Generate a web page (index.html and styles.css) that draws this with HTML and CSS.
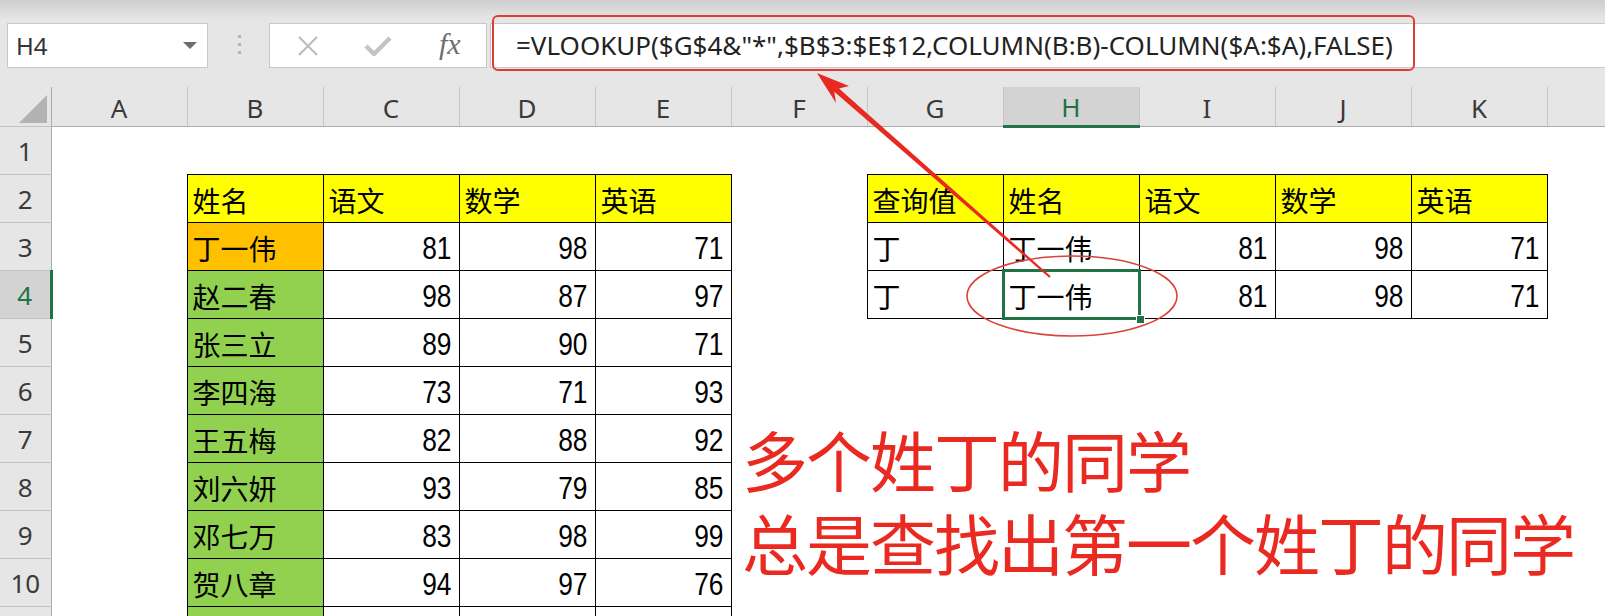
FILE: index.html
```html
<!DOCTYPE html>
<html lang="zh-CN">
<head>
<meta charset="UTF-8">
<title>VLOOKUP 通配符查找</title>
<link rel="stylesheet" href="styles.css">
</head>
<body>
    <div class="topbar">
        <div class="name-box">
            <span>H4</span>
            <span class="caret"></span>
        </div>
        <div class="grip"><i></i><i></i><i></i></div>
        <div class="fx-tools">
            <svg class="ico" width="24" height="20" viewBox="0 0 24 20">
                <path d="M3 1 L21 19 M21 1 L3 19" stroke="#bdbdbd" stroke-width="2.2" fill="none"/>
            </svg>
            <svg class="ico" width="28" height="20" viewBox="0 0 28 20">
                <path d="M2 10 L10 18 L26 2" stroke="#c4c4c4" stroke-width="4.5" fill="none"/>
            </svg>
            <span class="fx">fx</span>
        </div>
        <div class="formula">=VLOOKUP($G$4&amp;"*",$B$3:$E$12,COLUMN(B:B)-COLUMN($A:$A),FALSE)</div>
    </div>

    <table class="sheet">
        <colgroup>
            <col class="c-head">
            <col><col><col><col><col><col><col><col><col><col><col>
            <col class="c-last">
        </colgroup>
        <tr class="col-heads">
            <th class="corner"><span class="tri"></span></th>
            <th>A</th><th>B</th><th>C</th><th>D</th><th>E</th><th>F</th>
            <th>G</th><th class="sel">H</th><th>I</th><th>J</th><th>K</th><th></th>
        </tr>
        <tr>
            <th>1</th>
            <td></td><td></td><td></td><td></td><td></td><td></td>
            <td></td><td></td><td></td><td></td><td></td><td></td>
        </tr>
        <tr>
            <th>2</th>
            <td></td>
            <td class="b yel">姓名</td><td class="b yel">语文</td><td class="b yel">数学</td><td class="b yel">英语</td>
            <td></td>
            <td class="b yel">查询值</td><td class="b yel">姓名</td><td class="b yel">语文</td><td class="b yel">数学</td><td class="b yel">英语</td>
            <td></td>
        </tr>
        <tr>
            <th>3</th>
            <td></td>
            <td class="b org">丁一伟</td><td class="b num"><span>81</span></td><td class="b num"><span>98</span></td><td class="b num"><span>71</span></td>
            <td></td>
            <td class="b">丁</td><td class="b">丁一伟</td><td class="b num"><span>81</span></td><td class="b num"><span>98</span></td><td class="b num"><span>71</span></td>
            <td></td>
        </tr>
        <tr>
            <th class="sel">4</th>
            <td></td>
            <td class="b grn">赵二春</td><td class="b num"><span>98</span></td><td class="b num"><span>87</span></td><td class="b num"><span>97</span></td>
            <td></td>
            <td class="b">丁</td><td class="b active">丁一伟</td><td class="b num"><span>81</span></td><td class="b num"><span>98</span></td><td class="b num"><span>71</span></td>
            <td></td>
        </tr>
        <tr>
            <th>5</th>
            <td></td>
            <td class="b grn">张三立</td><td class="b num"><span>89</span></td><td class="b num"><span>90</span></td><td class="b num"><span>71</span></td>
            <td></td><td></td><td></td><td></td><td></td><td></td><td></td>
        </tr>
        <tr>
            <th>6</th>
            <td></td>
            <td class="b grn">李四海</td><td class="b num"><span>73</span></td><td class="b num"><span>71</span></td><td class="b num"><span>93</span></td>
            <td></td><td></td><td></td><td></td><td></td><td></td><td></td>
        </tr>
        <tr>
            <th>7</th>
            <td></td>
            <td class="b grn">王五梅</td><td class="b num"><span>82</span></td><td class="b num"><span>88</span></td><td class="b num"><span>92</span></td>
            <td></td><td></td><td></td><td></td><td></td><td></td><td></td>
        </tr>
        <tr>
            <th>8</th>
            <td></td>
            <td class="b grn">刘六妍</td><td class="b num"><span>93</span></td><td class="b num"><span>79</span></td><td class="b num"><span>85</span></td>
            <td></td><td></td><td></td><td></td><td></td><td></td><td></td>
        </tr>
        <tr>
            <th>9</th>
            <td></td>
            <td class="b grn">邓七万</td><td class="b num"><span>83</span></td><td class="b num"><span>98</span></td><td class="b num"><span>99</span></td>
            <td></td><td></td><td></td><td></td><td></td><td></td><td></td>
        </tr>
        <tr>
            <th>10</th>
            <td></td>
            <td class="b grn">贺八章</td><td class="b num"><span>94</span></td><td class="b num"><span>97</span></td><td class="b num"><span>76</span></td>
            <td></td><td></td><td></td><td></td><td></td><td></td><td></td>
        </tr>
        <tr>
            <th></th>
            <td></td>
            <td class="b grn"></td><td class="b"></td><td class="b"></td><td class="b"></td>
            <td></td><td></td><td></td><td></td><td></td><td></td><td></td>
        </tr>
    </table>

    <!-- annotations drawn over the sheet -->
    <div class="mark-box"></div>
    <svg class="marks" width="1605" height="616" viewBox="0 0 1605 616">
        <polygon fill="#e9281f" points="817,73 849,86 839,88.6 1050.7,276.3 1049.3,277.8 834.3,91.8 836,103"/>
        <ellipse cx="1072" cy="296" rx="105" ry="40" fill="none" stroke="#d9433b" stroke-width="1.6"/>
    </svg>
    <div class="note">
        <div>多个姓丁的同学</div>
        <div>总是查找出第一个姓丁的同学</div>
    </div>
</body>
</html>
```

FILE: styles.css
```css
html, body {
    margin: 0;
    height: 616px;
    overflow: hidden;
}
body {
    position: relative;
    width: 1605px;
    background: #fff;
    font-family: "Noto Sans", sans-serif;
    color: #222;
}
.topbar {
    display: flex;
    align-items: flex-start;
    height: 87px;
    padding-top: 23px;
    box-sizing: border-box;
    background: linear-gradient(#cdcdcd 0px, #e2e2e2 16px, #e6e6e6 22px);
}
.name-box {
    display: flex;
    align-items: center;
    justify-content: space-between;
    width: 201px;
    height: 45px;
    margin-left: 7px;
    padding: 0 10px 0 8px;
    box-sizing: border-box;
    background: #fff;
    border: 1px solid #c8c8c8;
    font-size: 24px;
    color: #333;
}
.caret {
    width: 0;
    height: 0;
    border-left: 7px solid transparent;
    border-right: 7px solid transparent;
    border-top: 7px solid #6d6d6d;
}
.grip {
    display: flex;
    flex-direction: column;
    gap: 5px;
    margin: 12px 0 0 30px;
}
.grip i {
    display: block;
    width: 3px;
    height: 3px;
    background: #b5b5b5;
}
.fx-tools {
    display: flex;
    align-items: center;
    width: 218px;
    height: 45px;
    margin-left: 28px;
    padding-left: 26px;
    box-sizing: border-box;
    background: #fff;
    border: 1px solid #c8c8c8;
}
.ico {
    margin-right: 44px;
}
.ico + .ico {
    margin-right: 47px;
}
.fx {
    font-family: "Liberation Serif", serif;
    font-style: italic;
    font-size: 30px;
    color: #6e6e6e;
    margin-top: -4px;
}
.formula {
    flex: 1;
    height: 45px;
    margin-left: 3px;
    padding-left: 25px;
    box-sizing: border-box;
    background: #fff;
    border: 1px solid #c8c8c8;
    border-right: none;
    font-size: 26px;
    line-height: 42px;
    color: #222;
    white-space: nowrap;
}

.sheet {
    border-collapse: collapse;
    table-layout: fixed;
    width: 1605px;
    font-family: "Liberation Sans", "Noto Sans CJK SC", sans-serif;
}
.sheet col {
    width: 136px;
}
.sheet col.c-head {
    width: 51px;
}
.sheet col.c-last {
    width: 59px;
}
.sheet tr {
    height: 48px;
}
.sheet tr.col-heads {
    height: 38px;
}
.sheet th {
    padding: 0;
    font-family: "Noto Sans", sans-serif;
    font-weight: normal;
    font-size: 26px;
    color: #3a3a3a;
    background: #e6e6e6;
}
.col-heads th {
    border-right: 1px solid #c6c6c6;
    border-bottom: 1px solid #ababab;
    padding-top: 2px;
}
.sheet tr th:first-child {
    border-right: 1px solid #ababab;
    border-bottom: 1px solid #c3c3c3;
}
.sheet th.sel {
    background: #d3d3d3;
    color: #217346;
}
.col-heads th.sel {
    border-bottom: 3px solid #217346;
}
.sheet tr th.sel:first-child {
    border-right: 3px solid #217346;
}
.corner {
    position: relative;
}
.tri {
    position: absolute;
    right: 4px;
    bottom: 3px;
    width: 0;
    height: 0;
    border-left: 28px solid transparent;
    border-bottom: 28px solid #b3b3b3;
}

.sheet td {
    padding: 3px 7px 0 5px;
    font-family: "Noto Sans CJK SC", sans-serif;
    font-size: 28px;
    line-height: 1;
    color: #000;
    white-space: nowrap;
    overflow: hidden;
}
.sheet td.b {
    border: 1px solid #000;
}
.sheet td.num {
    text-align: right;
    font-family: "Liberation Sans", sans-serif;
    font-size: 31px;
}
.num span {
    display: inline-block;
    transform: scaleX(0.85);
    transform-origin: right center;
}
.yel {
    background: #ffff00;
}
.org {
    background: #ffc000;
}
.grn {
    background: #92d050;
}
.sheet td.active {
    position: relative;
    overflow: visible;
}
.active::after {
    content: "";
    position: absolute;
    left: -2px;
    top: -2px;
    right: -2px;
    bottom: -2px;
    border: 3px solid #217346;
}
.active::before {
    content: "";
    position: absolute;
    right: -6px;
    bottom: -6px;
    width: 7px;
    height: 7px;
    background: #217346;
    border: 1px solid #fff;
    z-index: 1;
}

.mark-box {
    position: absolute;
    left: 492px;
    top: 15px;
    width: 923px;
    height: 56px;
    box-sizing: border-box;
    border: 2px solid #e23b34;
    border-radius: 6px;
}
.marks {
    position: absolute;
    left: 0;
    top: 0;
    pointer-events: none;
}
.note {
    position: absolute;
    left: 742px;
    top: 417px;
    font-family: "Noto Sans CJK SC", sans-serif;
    font-size: 66px;
    line-height: 83px;
    letter-spacing: -2px;
    color: #ea2a20;
    white-space: nowrap;
}
```
